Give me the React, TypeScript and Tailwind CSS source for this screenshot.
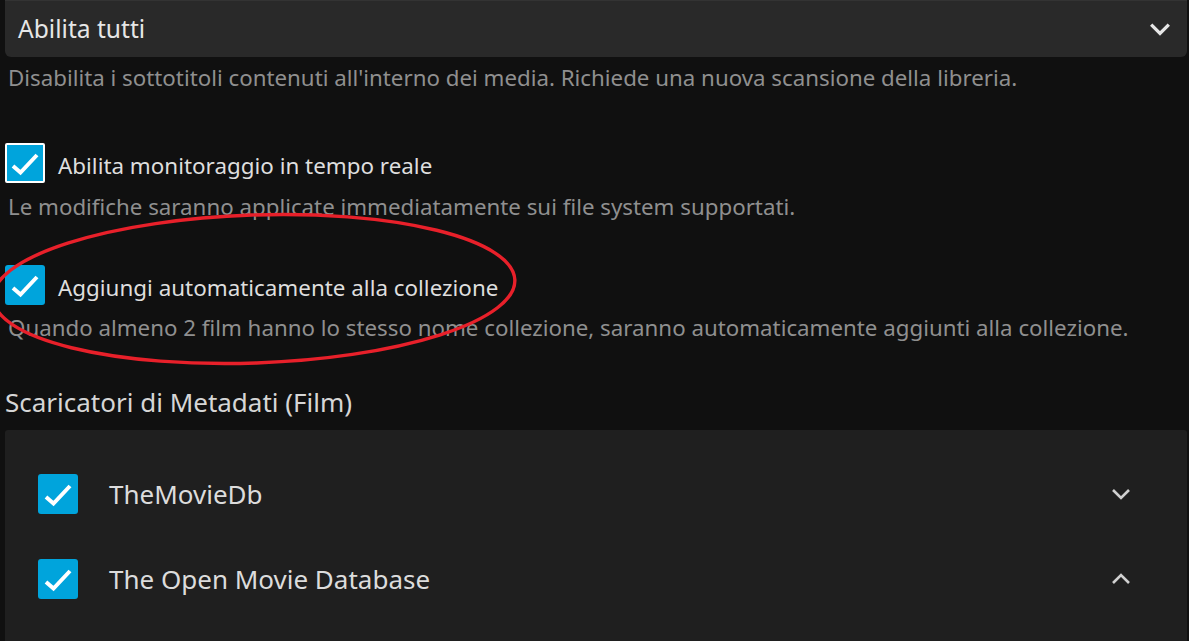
import React from 'react';

const font = { fontFamily: '"Noto Sans", "Open Sans", sans-serif' };

const Check = ({ focused = false }: { focused?: boolean }) => (
    <div
        className={`w-[40px] h-[40px] shrink-0 bg-[#00a4dc] flex items-center justify-center ${focused ? 'border-2 border-white rounded-[2px]' : 'rounded-[3px]'}`}
    >
        <svg width="40" height="40" viewBox="0 0 40 40" className={focused ? '-m-[2px]' : ''}>
            <polyline points="8,23 15.5,29.5 32,12" fill="none" stroke="#fff" strokeWidth="4" />
        </svg>
    </div>
);

const Chevron = ({ up = false, size = 20, color = '#e6e6e6', width = 3 }: any) => (
    <svg width={size} height={size} viewBox="0 0 20 20">
        <polyline
            points={up ? '2,14 10,6 18,14' : '2,6 10,14 18,6'}
            fill="none"
            stroke={color}
            strokeWidth={width}
        />
    </svg>
);

const CheckRow = ({ label, desc, focused, descGap }: any) => (
    <div className="flex flex-col">
        <div className="flex items-center gap-[13px] h-[40px]">
            <Check focused={focused} />
            <span className="text-[22.4px] text-[#dedede] leading-none mt-[6px]">{label}</span>
        </div>
        <p className={`text-[22.3px] text-[#8f8f8f] ml-[3px] leading-[28px] ${descGap}`}>{desc}</p>
    </div>
);

const Provider = ({ name, up }: any) => (
    <div className="flex items-center h-[85px] pl-[33px] pr-[56px]">
        <Check />
        <span className="ml-[31px] text-[26px] text-[#dcdcdc] leading-none">{name}</span>
        <div className="ml-auto">
            <Chevron up={up} size={20} color="#d0d0d0" width={2.6} />
        </div>
    </div>
);

export default function App() {
    return (
        <div className="relative w-[1189px] h-[641px] overflow-hidden bg-[#101010]" style={font}>
            <div className="pl-[5px] pr-[2px] flex flex-col">
                <div className="h-[57px] bg-[#292929] rounded-b-[6px] border-t border-[#333] flex items-center pl-[13px] pr-[16px]">
                    <span className="text-[24.6px] text-[#e6e6e6] leading-none">Abilita tutti</span>
                    <div className="ml-auto">
                        <Chevron size={22} />
                    </div>
                </div>
                <p className="text-[22.3px] text-[#8f8f8f] mt-[7px] ml-[3px] leading-[28px]">
                    Disabilita i sottotitoli contenuti all'interno dei media. Richiede una nuova scansione della libreria.
                </p>

                <div className="mt-[51px]">
                    <CheckRow
                        focused
                        descGap="mt-[10px]"
                        label="Abilita monitoraggio in tempo reale"
                        desc="Le modifiche saranno applicate immediatamente sui file system supportati."
                    />
                </div>
                <div className="mt-[44px]">
                    <CheckRow
                        descGap="mt-[9px]"
                        label="Aggiungi automaticamente alla collezione"
                        desc="Quando almeno 2 film hanno lo stesso nome collezione, saranno automaticamente aggiunti alla collezione."
                    />
                </div>

                <h2 className="text-[26px] text-[#d6d6d6] mt-[43px] leading-[34px]">Scaricatori di Metadati (Film)</h2>

                <div className="mt-[11px] bg-[#1f1f1f] rounded-t-[3px] pt-[21px] h-[300px]">
                    <Provider name="TheMovieDb" />
                    <Provider name="The Open Movie Database" up />
                </div>
            </div>

            <svg className="absolute inset-0 pointer-events-none" width="1189" height="641">
                <ellipse cx="254" cy="289" rx="261" ry="74" fill="none" stroke="#e8202a" strokeWidth="3.4" transform="rotate(-2 254 289)" />
            </svg>
        </div>
    );
}
